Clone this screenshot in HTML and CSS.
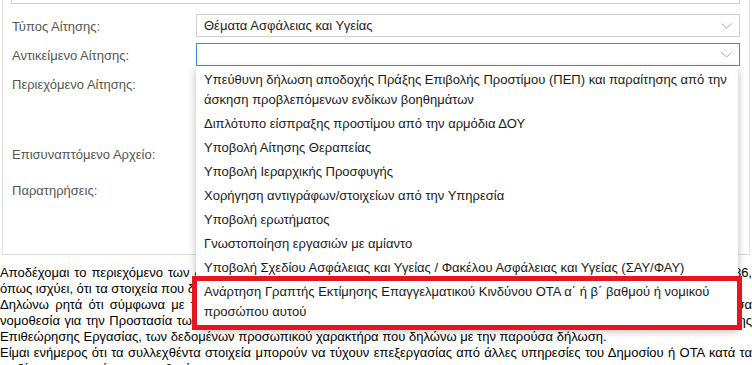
FILE: index.html
```html
<!DOCTYPE html>
<html lang="el">
<head>
<meta charset="utf-8">
<title>Αίτηση</title>
<link rel="stylesheet" href="styles.css">
</head>
<body>
<div class="panel">
  <div class="prev-field"></div>
  <div class="form">
    <div class="label">Τύπος Αίτησης:</div>
    <div class="control">
      <div class="select">Θέματα Ασφάλειας και Υγείας
        <svg class="chev" width="11" height="6" viewBox="0 0 11 6"><polyline points="0.5,0.5 5.5,5 10.5,0.5" fill="none" stroke="#a6a6a6" stroke-width="1"/></svg>
      </div>
    </div>

    <div class="label">Αντικείμενο Αίτησης:</div>
    <div class="control">
      <div class="select focused">
        <svg class="chev" width="11" height="6" viewBox="0 0 11 6"><polyline points="0.5,0.5 5.5,5 10.5,0.5" fill="none" stroke="#a6a6a6" stroke-width="1"/></svg>
      </div>
      <ul class="dropdown">
        <li>Υπεύθυνη δήλωση αποδοχής Πράξης Επιβολής Προστίμου (ΠΕΠ) και παραίτησης από την άσκηση προβλεπόμενων ενδίκων βοηθημάτων</li>
        <li>Διπλότυπο είσπραξης προστίμου από την αρμόδια ΔΟΥ</li>
        <li>Υποβολή Αίτησης Θεραπείας</li>
        <li>Υποβολή Ιεραρχικής Προσφυγής</li>
        <li>Χορήγηση αντιγράφων/στοιχείων από την Υπηρεσία</li>
        <li>Υποβολή ερωτήματος</li>
        <li>Γνωστοποίηση εργασιών με αμίαντο</li>
        <li>Υποβολή Σχεδίου Ασφάλειας και Υγείας / Φακέλου Ασφάλειας και Υγείας (ΣΑΥ/ΦΑΥ)</li>
        <li>Ανάρτηση Γραπτής Εκτίμησης Επαγγελματικού Κινδύνου ΟΤΑ α΄ ή β΄ βαθμού ή νομικού προσώπου αυτού</li>
      </ul>
    </div>

    <div class="label">Περιεχόμενο Αίτησης:</div>
    <div class="control"><div class="textarea"></div></div>

    <div class="label">Επισυναπτόμενο Αρχείο:</div>
    <div class="control"><div class="file"></div></div>

    <div class="label">Παρατηρήσεις:</div>
    <div class="control"><div class="textarea"></div></div>
  </div>
</div>

<div class="declaration">
  <p>Αποδέχομαι το περιεχόμενο των δηλώσεων και γνωρίζω ότι με βάση τις διατάξεις της παρ. 6 του άρθρου 22 του Ν. 1599/1986, όπως ισχύει, ότι τα στοιχεία που δηλώνω είναι αληθή.</p>
  <p>Δηλώνω ρητά ότι σύμφωνα με τον Γενικό Κανονισμό για την Προστασία Δεδομένων (ΕΕ) 2016/679 και την εθνική ισχύουσα νομοθεσία για την Προστασία των Δεδομένων Προσωπικού Χαρακτήρα, συναινώ ρητά στην επεξεργασία, από τις Υπηρεσίες της Επιθεώρησης Εργασίας, των δεδομένων προσωπικού χαρακτήρα που δηλώνω με την παρούσα δήλωση.</p>
  <p>Είμαι ενήμερος ότι τα συλλεχθέντα στοιχεία μπορούν να τύχουν επεξεργασίας από άλλες υπηρεσίες του Δημοσίου ή ΟΤΑ κατά τα οριζόμενα στην κείμενη νομοθεσία.</p>
</div>

<div class="highlight"></div>
</body>
</html>
```

FILE: styles.css
```css
html, body {
  margin: 0;
  padding: 0;
  background: #fff;
}
body {
  font-family: "Liberation Sans", Arial, sans-serif;
  font-size: 13px;
  color: #000;
  width: 752px;
  overflow: hidden;
  position: relative;
}
.panel {
  margin-left: 2px;
  width: 748px;
  box-sizing: border-box;
  border: 1px solid #dcdcdc;
  border-top: none;
  padding: 0 9px 12px 8px;
}
.prev-field {
  height: 4px;
  box-sizing: border-box;
  border: 1px solid #cfcfcf;
  border-top: none;
  margin-bottom: 10px;
}
.form {
  display: grid;
  grid-template-columns: 185px 1fr;
  row-gap: 6px;
}
.label {
  color: #555;
  padding: 5px 0 0 1px;
  line-height: 16px;
}
.control {
  position: relative;
}
.select {
  position: relative;
  height: 23px;
  box-sizing: border-box;
  border: 1px solid #cfcfcf;
  padding: 0 7px;
  line-height: 21px;
  color: #222;
  background: #fff;
}
.select.focused {
  border-color: #3d8fd0;
}
.chev {
  position: absolute;
  right: 7px;
  top: 8px;
}
.textarea {
  height: 62px;
  margin-right: 3px;
  border: 1px solid #e6e6e6;
}
.file {
  height: 28px;
  margin-right: 3px;
  border: 1px solid #e6e6e6;
}
.dropdown {
  position: absolute;
  top: 100%;
  left: 0;
  width: 542px;
  margin: 0;
  padding: 2px 0 4px;
  list-style: none;
  background: #fff;
  box-shadow: 0 3px 8px rgba(0, 0, 0, 0.28);
  z-index: 5;
}
.dropdown li {
  padding: 2px 8px;
  line-height: 20px;
  color: #1a1a1a;
}
.declaration {
  margin-top: 10px;
  width: 752px;
  line-height: 16px;
  text-align: justify;
}
.declaration p {
  margin: 0;
}
.highlight {
  position: absolute;
  left: 192px;
  top: 276px;
  width: 550px;
  height: 54px;
  box-sizing: border-box;
  border: 5px solid #e4161f;
  z-index: 10;
}
```
